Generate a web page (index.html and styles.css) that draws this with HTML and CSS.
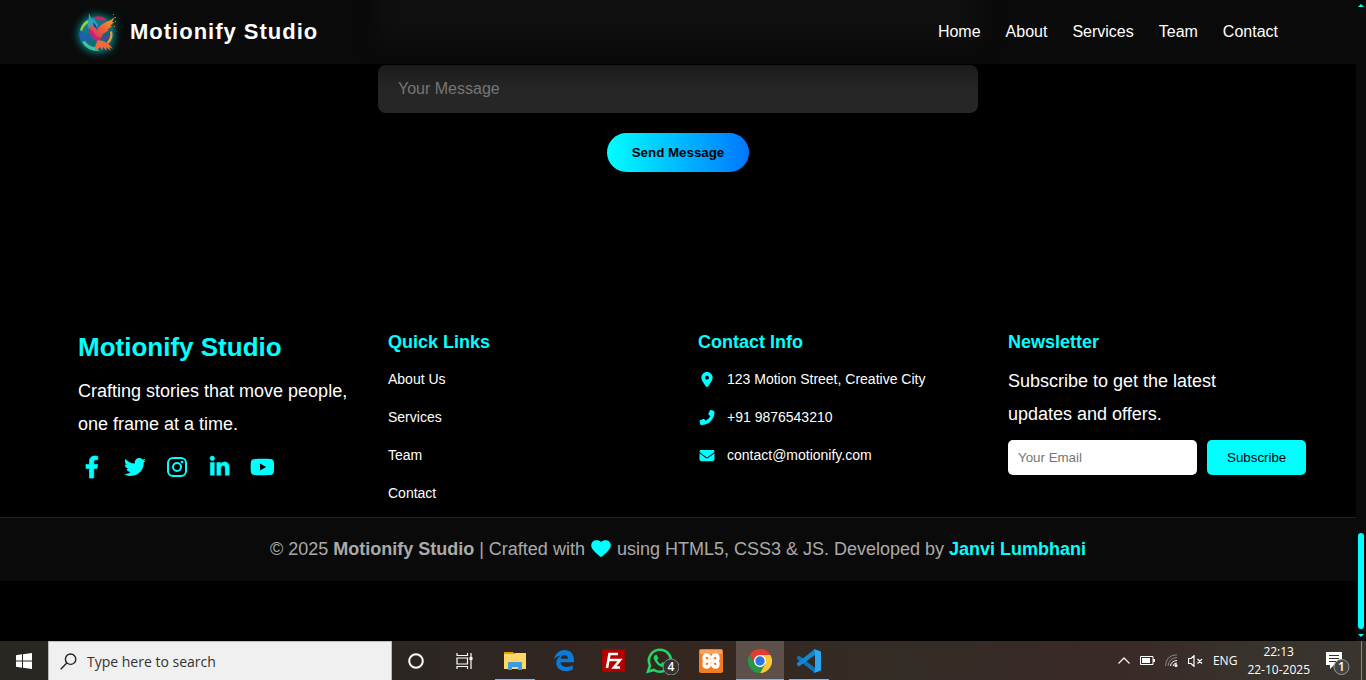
FILE: index.html
```html
<!DOCTYPE html>
<html lang="en">
<head>
<meta charset="utf-8">
<meta name="viewport" content="width=device-width, initial-scale=1">
<title>Motionify Studio</title>
<link rel="stylesheet" href="styles.css">
</head>
<body>
<div class="viewport">
  <div class="page">
    <header class="site-header">
      <div class="container header-inner">
        <a class="brand" href="#home">
          <svg class="brand-mark" viewBox="0 0 40 40" aria-hidden="true">
            <defs>
              <linearGradient id="wing" x1="0" y1="1" x2="1" y2="0"><stop offset="0" stop-color="#d8206a"/><stop offset=".5" stop-color="#ee5a3a"/><stop offset="1" stop-color="#f9a62c"/></linearGradient>
              <linearGradient id="disc" x1="0" y1="0" x2="1" y2="1"><stop offset="0" stop-color="#17808f"/><stop offset="1" stop-color="#0a5f6b"/></linearGradient>
            </defs>
            <circle cx="18.500" cy="22" r="17" fill="url(#disc)"/>
            <path d="M2 18Q5 9 10.500 8l1 2.500Q6 13 4 19z" fill="#9ccc3c"/>
            <path d="M1.500 20l3 0 3 4 3-2 1 6-4 6Q1 29 1.500 20z" fill="#1c5fae"/>
            <path d="M4 30q5 9 17 9l-3-4q-7 0-11-6z" fill="#46c3a0"/>
            <path d="M16 5q8-2 12 2l-4 2q-4-2-7-1z" fill="#c9265f"/>
            <path d="M11 1q1 4 4 7l1-2q1 4 4 6l-1 6-6-1-3-1q-1-3 0-6 1-4 1-9z" fill="#2f9fc0"/>
            <path d="M15 10q4 3 4 8l-3-2z" fill="#1c3f8d"/>
            <path d="M14 20q-1-4-5-4l4-2q5 0 6 5 2-6 9-9 6-2 9-5l-3 5 2 0-4 4 2 0-5 4 2 0-6 4-2 4q-2 4-5 2-4-3-4-8z" fill="url(#wing)"/>
            <path d="M11 17q0 8 8 12l4-3q-6-1-8-7z" fill="#c42480"/>
            <path d="M23 25q6 1 9-4 0 6-7 8z" fill="#5c3f9b"/>
            <path d="M34 19q2 8-4 13l-1-2q4-4 3-10z" fill="#ef9a38"/>
            <path d="M17 38q0-6 3-10l5 1q5 1 10 8l-4-2 2 4-5-4 1 4-4-4-1 3-2-3-3 3z" fill="#f0693f"/>
            <path d="M35 2h1v1h-1zM37 5h1v1h-1zM37 9h1v1h-1zM36 14h1v1h-1z" fill="#f07d26"/>
          </svg>
          <span>Motionify Studio</span>
        </a>
        <nav class="main-nav" aria-label="Main">
          <a href="#home">Home</a><a href="#about">About</a><a href="#services">Services</a><a href="#team">Team</a><a href="#contact">Contact</a>
        </nav>
      </div>
    </header>

    <main class="contact">
      <form class="contact-form">
        <textarea class="message-box" rows="1" placeholder="Your Message" aria-label="Your Message"></textarea>
        <button class="send-button" type="button">Send Message</button>
      </form>
    </main>

    <footer>
      <div class="container footer-grid">
        <section>
          <h2 class="footer-brand">Motionify Studio</h2>
          <p class="tagline">Crafting stories that move people, one frame at a time.</p>
          <div class="socials">
            <a href="#" aria-label="Facebook"><svg viewBox="0 0 320 512"><path d="M279.14 288l14.22-92.66h-88.91v-60.13c0-25.35 12.42-50.06 52.24-50.06h40.42V6.26S260.43 0 225.36 0c-73.22 0-121.08 44.38-121.08 124.72v70.62H22.89V288h81.39v224h100.17V288z" stroke="#0ff" stroke-width="16"/></svg></a>
            <a href="#" aria-label="Twitter"><svg viewBox="0 0 512 512"><path d="M459.37 151.716c.325 4.548.325 9.097.325 13.645 0 138.72-105.583 298.558-298.558 298.558-59.452 0-114.68-17.219-161.137-47.106 8.447.974 16.568 1.299 25.34 1.299 49.055 0 94.213-16.568 130.274-44.832-46.132-.975-84.792-31.188-98.112-72.772 6.498.974 12.995 1.624 19.818 1.624 9.421 0 18.843-1.3 27.614-3.573-48.081-9.747-84.143-51.98-84.143-102.985v-1.299c13.969 7.797 30.214 12.67 47.431 13.319-28.264-18.843-46.781-51.005-46.781-87.391 0-19.492 5.197-37.36 14.294-52.954 51.655 63.675 129.3 105.258 216.365 109.807-1.624-7.797-2.599-15.918-2.599-24.04 0-57.828 46.782-104.934 104.934-104.934 30.213 0 57.502 12.67 76.67 33.137 23.715-4.548 46.456-13.32 66.599-25.34-7.798 24.366-24.366 44.833-46.132 57.827 21.117-2.273 41.584-8.122 60.426-16.243-14.292 20.791-32.161 39.308-52.628 54.253z"/></svg></a>
            <a href="#" aria-label="Instagram"><svg viewBox="0 0 22 22"><rect x="2" y="2" width="18" height="18" rx="5" fill="none" stroke="#0ff" stroke-width="2"/><circle cx="11" cy="11" r="4" fill="none" stroke="#0ff" stroke-width="2"/><circle cx="16" cy="6" r="1.3"/></svg></a>
            <a href="#" aria-label="LinkedIn"><svg viewBox="0 0 448 512"><path d="M100.28 448H7.4V148.9h92.88zM53.79 108.1C24.09 108.1 0 83.5 0 53.8a53.79 53.79 0 0 1 107.58 0c0 29.7-24.1 54.3-53.79 54.3zM447.9 448h-92.68V302.4c0-34.7-.7-79.2-48.29-79.2-48.29 0-55.69 37.7-55.69 76.7V448h-92.78V148.9h89.08v40.8h1.3c12.4-23.5 42.69-48.3 87.88-48.3 94 0 111.28 61.9 111.28 142.3V448z" stroke="#0ff" stroke-width="12"/></svg></a>
            <a href="#" aria-label="YouTube"><svg viewBox="0 0 576 512"><path d="M549.655 124.083c-6.281-23.65-24.787-42.276-48.284-48.597C458.781 64 288 64 288 64S117.22 64 74.629 75.486c-23.497 6.322-42.003 24.947-48.284 48.597-11.412 42.867-11.412 132.305-11.412 132.305s0 89.438 11.412 132.305c6.281 23.65 24.787 41.5 48.284 47.821C117.22 448 288 448 288 448s170.78 0 213.371-11.486c23.497-6.321 42.003-24.171 48.284-47.821 11.412-42.867 11.412-132.305 11.412-132.305s0-89.438-11.412-132.305zm-317.51 213.508V175.185l142.739 81.205-142.739 81.201z"/></svg></a>
          </div>
        </section>
        <section>
          <h3>Quick Links</h3>
          <ul class="footer-list">
            <li><a href="#about">About Us</a></li>
            <li><a href="#services">Services</a></li>
            <li><a href="#team">Team</a></li>
            <li><a href="#contact">Contact</a></li>
          </ul>
        </section>
        <section>
          <h3>Contact Info</h3>
          <ul class="footer-list">
            <li><svg viewBox="0 0 384 512" aria-hidden="true"><path d="M215.7 499.2C267 435 384 279.4 384 192C384 86 298 0 192 0S0 86 0 192c0 87.4 117 243 168.3 307.2c12.3 15.3 35.1 15.3 47.4 0zM192 128a64 64 0 1 0 0 128 64 64 0 1 0 0-128z" fill-rule="evenodd"/></svg>123 Motion Street, Creative City</li>
            <li><svg viewBox="0 0 512 512" aria-hidden="true"><path transform="translate(512 0) scale(-1 1)" d="M164.9 24.6c-7.7-18.6-28-28.5-47.4-23.2l-88 24C12.1 30.2 0 46 0 64C0 311.4 200.6 512 448 512c18 0 33.8-12.1 38.6-29.5l24-88c5.3-19.4-4.6-39.7-23.2-47.4l-96-40c-16.3-6.8-35.2-2.1-46.3 11.6L304.7 368C234.3 334.7 177.3 277.7 144 207.3L193.3 167c13.7-11.2 18.4-30 11.6-46.3l-40-96z"/></svg>+91 9876543210</li>
            <li><svg viewBox="0 0 512 512" aria-hidden="true"><path d="M48 64C21.5 64 0 85.5 0 112c0 15.1 7.1 29.3 19.2 38.4L236.8 313.6c11.4 8.5 27 8.5 38.4 0L492.8 150.4c12.1-9.1 19.2-23.3 19.2-38.4c0-26.5-21.5-48-48-48H48zM0 176V384c0 35.3 28.7 64 64 64H448c35.3 0 64-28.7 64-64V176L294.4 339.2c-22.8 17.1-54 17.1-76.8 0L0 176z"/></svg>contact@motionify.com</li>
          </ul>
        </section>
        <section>
          <h3>Newsletter</h3>
          <p class="newsletter-text">Subscribe to get the latest updates and offers.</p>
          <form class="newsletter-form">
            <input class="email-input" type="email" placeholder="Your Email" aria-label="Your Email">
            <button class="subscribe-button" type="button">Subscribe</button>
          </form>
        </section>
      </div>
      <p class="copyright">© 2025 <strong>Motionify Studio</strong> | Crafted with <svg class="heart" viewBox="0 0 20 17" role="img" aria-label="love"><path d="M10 2C12 0 16-.5 18.300 1.700 20.500 4 20 7 18.500 9 16.500 12 13 15 11 16.500Q10 17.200 9 16.500C7 15 3.500 12 1.500 9 0 7-.5 4 1.700 1.700 4-.5 8 0 10 2z"/></svg> using HTML5, CSS3 &amp; JS. Developed by <strong class="author">Janvi Lumbhani</strong></p>
    </footer>
  </div>
  <div class="scrollbar" aria-hidden="true">
    <span class="arrow arrow-up"></span>
    <span class="thumb"></span>
    <span class="arrow arrow-down"></span>
  </div>
</div>

<div class="taskbar">
  <button class="task-cell" type="button" aria-label="Start"><svg width="16" height="16" viewBox="0 0 16 16"><path fill="#fff" d="M0 2.2L6 1.3V7.5H0zM7 1.2L16 0V7.5H7zM0 8.5H6V14.7L0 13.8zM7 8.5H16V16L7 14.8z"/></svg></button>
  <label class="search">
    <svg width="17" height="17" viewBox="0 0 17 17" fill="none" stroke="#222" stroke-width="1.4"><circle cx="10.6" cy="6.2" r="5.2"/><path d="M6.8 10L.7 16.2"/></svg>
    <input type="text" placeholder="Type here to search" aria-label="Type here to search">
  </label>
  <button class="task-cell" type="button" aria-label="Cortana"><svg width="16" height="16" viewBox="0 0 16 16"><circle cx="8" cy="8" r="6.8" fill="none" stroke="#fff" stroke-width="2"/></svg></button>
  <button class="task-cell" type="button" aria-label="Task View"><svg width="17" height="16" viewBox="0 0 17 16" fill="none" stroke="#fff" stroke-width="1.2"><path d="M1 0v2.5h10.500V0M1 16v-2.500h10.500V16M1 5h10.500v6H1zM15 0v16"/><path d="M13.500 4h3v3h-3z" fill="#fff" stroke="none"/></svg></button>
  <div class="apps">
    <button class="task-cell running" type="button" aria-label="File Explorer"><svg width="22" height="20" viewBox="0 0 22 20"><path fill="#e2a100" d="M0 1h9l2 2H0z"/><path fill="#ffd766" d="M0 3h10l1-1h11v16H0z"/><path fill="#3d9be0" d="M4 19v-7q0-1 1-1h12q1 0 1 1v7h-4v-3H8v3z"/></svg></button>
    <button class="task-cell" type="button" aria-label="Edge"><svg width="20" height="21" viewBox="0 0 20 21"><path fill="#0b7bd8" d="M0 9.500C1.200 3.600 5.200 0 10.500 0 16.200 0 20 4 20 9.800V12.300H6.500c.2 3 2.600 4.600 5.800 4.600 2.500 0 4.700-.6 6.500-1.700v4.300c-2 1-4.500 1.500-7.200 1.500C5.800 21 2.300 17.600 2.300 12.700c0-3 1.500-5.600 4.600-7.300C4.200 5.700 1.700 7 0 9.500zM6.700 8.700h7.200C13.900 6.300 12.700 5 10.600 5 8.400 5 7 6.500 6.700 8.700z"/></svg></button>
    <button class="task-cell" type="button" aria-label="FileZilla"><svg width="23" height="23" viewBox="0 0 23 23"><path fill="#b50000" d="M0 0h23v23H0z"/><path d="M0 0h23v23H0z" fill="none" stroke="#8c0000" stroke-dasharray="1 1"/><path d="M5 19L7.500 5H16M6 11h7M12 11h6l-6 7.500h6" fill="none" stroke="#fff" stroke-width="2.600"/></svg></button>
    <button class="task-cell" type="button" aria-label="WhatsApp"><svg class="whatsapp" width="34" height="28" viewBox="1 0 34 28"><path d="M6 18.500A11 11 0 1 1 10 23L4 24.600z" fill="none" stroke="#25d366" stroke-width="2.600"/><path d="M10.500 8.500l2-1 2 4-1.500 1.500q1.500 3 4 4l1.500-2 4 2q0 3-4 3-4-.5-7-5-3-4-1-6.500z" fill="#25d366"/><circle cx="27" cy="20" r="8" fill="#333" stroke="#888"/><text x="27" y="24" text-anchor="middle" class="badge-text">4</text></svg></button>
    <button class="task-cell" type="button" aria-label="XAMPP"><svg width="24" height="24" viewBox="0 0 24 24"><rect width="24" height="24" rx="2" fill="#f47b20"/><path d="M1 1h22v4H1z" fill="#f9a05d"/><g fill="none" stroke="#fff" stroke-width="3.400" stroke-linejoin="round" stroke-linecap="round"><path d="M10.500 8.500Q10 6 7.500 6 5 6 5 9t2.500 3Q5 12 5 15t2.500 3q2.500 0 3-2.500M13.500 8.500Q14 6 16.500 6 19 6 19 9t-2.500 3q2.500 0 2.500 3t-2.500 3q-2.500 0-3-2.500M8 12h8"/></g></svg></button>
    <button class="task-cell running active" type="button" aria-label="Chrome"><svg width="24" height="24" viewBox="0 0 24 24"><path fill="#e33b2e" d="M1.600 6A12 12 0 0 1 22.400 6H12L6.800 15z"/><path fill="#fcc934" d="M22.400 6A12 12 0 0 1 12 24l5.200-9L12 6z"/><path fill="#279847" d="M1.600 6A12 12 0 0 0 12 24l5.200-9H6.800z"/><circle cx="12" cy="12" r="6" fill="#fff"/><circle cx="12" cy="12" r="4.700" fill="#2f73e8"/></svg></button>
    <button class="task-cell running" type="button" aria-label="Visual Studio Code"><svg width="24" height="24" viewBox="0 0 24 24"><path fill="#0b75bd" d="M0 8l2-1.500L18 19v5L0 10z"/><path fill="#1488d0" d="M0 16l2 1.500L18 6V0L0 14z"/><path fill="#2ba7ef" d="M17 0l7 2.500v19L17 24l1-3V3z"/></svg></button>
  </div>
  <div class="tray">
    <svg width="12" height="7" viewBox="0 0 12 7"><path d="M.5 6.500L6 1l5.500 5.500" fill="none" stroke="#eee" stroke-width="1.300"/></svg>
    <svg width="15" height="9" viewBox="0 0 15 9"><path d="M.5.500h12.500v8H.5z" fill="none" stroke="#fff"/><path fill="#fff" d="M2 2h8v5H2zM13 3h2v3h-2z"/></svg>
    <svg width="13" height="13" viewBox="0 0 13 13" fill="none"><path d="M.5 12Q1 1 12 .8M3 12Q4 4 12 3.500" stroke="#888"/><path d="M5.500 12Q6 7 12 6.500M8 12q.5-3 4-3" stroke="#fff"/><circle cx="11" cy="11.500" r="1.500" fill="#fff"/></svg>
    <svg width="15" height="12" viewBox="0 0 15 12" fill="none" stroke="#fff" stroke-width="1.200"><path d="M.5 3.500h2.500L6 .7v10.600L3 8.500H.5zM9.500 4l4.500 4.500M14 4L9.500 8.500"/></svg>
    <span class="language">ENG</span>
    <time class="clock"><span>22:13</span><span>22-10-2025</span></time>
    <svg class="notice" width="26" height="28" viewBox="0 0 26 28"><path fill="#fff" d="M1 5h16v13h-8l-4 4v-4H1z"/><path d="M4 8.500h10M4 11.500h10M4 14.500h7" stroke="#333"/><circle cx="16.500" cy="20" r="7.500" fill="#444" stroke="#999"/><text x="16.500" y="24" text-anchor="middle" class="badge-text">1</text></svg>
    <span class="peek"></span>
  </div>
</div>
</body>
</html>
```

FILE: styles.css
```css
* { box-sizing: border-box; }

body {
  margin: 0;
  min-height: 100vh;
  display: flex;
  flex-direction: column;
  background: #000;
  color: #fff;
  font-family: Arial, "Liberation Sans", sans-serif;
}

a { color: inherit; text-decoration: none; }
h2, h3, p, ul { margin: 0; padding: 0; }
ul { list-style: none; }
button, input, textarea { font-family: inherit; border: 0; outline: 0; }

.viewport { flex: 1; display: flex; }
.page { flex: 1; min-width: 0; }
.container { max-width: 1200px; margin: 0 auto; }

/* Header */
.site-header {
  position: relative;
  overflow: clip;
  background: #0a0a0a;
}
.site-header::before {
  content: "";
  position: absolute;
  inset: -30px 0 22px;
  width: 600px;
  margin: 0 auto;
  background: #0f0f0f;
  filter: blur(10px);
}
.header-inner {
  position: relative;
  display: flex;
  align-items: center;
  justify-content: space-between;
  min-height: 64px;
}
.brand {
  display: flex;
  align-items: center;
  gap: 12px;
  font-size: 22px;
  font-weight: bold;
  letter-spacing: 1px;
}
.brand-mark {
  width: 40px;
  height: 40px;
  overflow: visible;
  filter: drop-shadow(0 0 5px rgba(0, 255, 255, .7));
}
.main-nav { display: flex; gap: 25px; font-size: 16px; }

/* Contact form */
.contact { padding: 1px 20px 150px; }
.contact-form {
  display: flex;
  flex-direction: column;
  align-items: center;
  gap: 20px;
  max-width: 600px;
  margin: 0 auto;
}
.message-box {
  width: 100%;
  height: 48px;
  padding: 14px 20px;
  border-radius: 8px;
  background: linear-gradient(#1b1b1b, #262626 24px);
  color: #fff;
  font-size: 16px;
  line-height: 20px;
  resize: none;
  overflow: hidden;
}
.message-box::placeholder { color: #757575; }
.send-button {
  padding: 12px 25px;
  border-radius: 30px;
  background: linear-gradient(90deg, #0ff, #0077ff);
  color: #000;
  font-weight: bold;
}

/* Footer */
.footer-grid {
  display: grid;
  grid-template-columns: repeat(4, minmax(0, 1fr));
  gap: 40px;
  padding-bottom: 5px;
  font-size: 18px;
  line-height: 33px;
}
.footer-grid svg { fill: #0ff; }
.footer-brand { color: #0ff; font-size: 26px; line-height: 50px; }
h3 { color: #0ff; font-size: 18px; line-height: 40px; }
.tagline { margin-top: 3px; }
.socials {
  display: flex;
  justify-content: space-between;
  max-width: 198px;
  margin-top: 15px;
}
.socials a { display: flex; justify-content: center; width: 28px; }
.socials svg { height: 22px; overflow: visible; }
.footer-list { margin-top: -2px; }
.footer-list li {
  display: flex;
  align-items: center;
  gap: 11px;
  font-size: 14px;
  line-height: 38px;
}
.footer-list svg { width: 18px; height: 15px; }
.newsletter-text { margin-top: 3px; }
.newsletter-form { display: flex; gap: 10px; margin-top: 9px; }
.email-input {
  flex: none;
  width: 189px;
  height: 35px;
  padding: 10px;
  border-radius: 5px;
  background: #fff;
}
.subscribe-button {
  padding: 10px 20px;
  border-radius: 5px;
  background: #0ff;
  color: #000;
}
.copyright {
  padding: 15px 20px;
  border-top: 1px solid #222;
  background: #0a0a0a;
  color: #aaa;
  font-size: 18px;
  line-height: 33px;
  text-align: center;
}
.heart { width: 20px; height: 17px; margin: 0 1px; vertical-align: -2px; fill: #0ff; }
.author { color: #0ff; }

/* Page scrollbar */
.scrollbar {
  width: 10px;
  padding: 4px 2px;
  display: flex;
  flex-direction: column;
  align-items: center;
  background: #0a0a0a;
}
.arrow { border: 3px solid transparent; }
.arrow-up { border-top: 0; border-bottom-color: #0ff; }
.arrow-down { border-bottom: 0; border-top-color: #0ff; }
.thumb {
  width: 6px;
  height: 96px;
  margin: auto 0 5px;
  border-radius: 3px;
  background: #0ff;
}

/* Taskbar */
.taskbar {
  display: flex;
  height: 39px;
  background: linear-gradient(90deg, #292722, #2c2623 30%, #352720 50%, #332c25 65%, #3a2927 82%, #38332d 92%, #39352d);
  font-family: "Segoe UI", "Open Sans", sans-serif;
}
.task-cell {
  display: flex;
  align-items: center;
  justify-content: center;
  width: 48px;
  padding: 0;
  background: none;
}
.search {
  display: flex;
  align-items: center;
  gap: 10px;
  width: 344px;
  padding-left: 11px;
  border: 1px solid #bbb;
  border-bottom: 0;
  background: #f0f0f0;
}
.search input {
  flex: 1;
  padding: 0;
  background: none;
  font-family: inherit;
  font-size: 14px;
}
.search input::placeholder { color: #333; }
.apps { display: flex; gap: 1px; margin-left: 3px; }
.running {
  background: linear-gradient(#83b5e0, #83b5e0) bottom / 40px 1px no-repeat;
}
.active {
  background-color: #5d504b;
  background-size: 100% 1px;
}
.badge-text { fill: #fff; font-size: 12px; font-weight: 600; }
.tray {
  display: flex;
  align-items: center;
  margin-left: auto;
  gap: 10px;
  font-size: 12px;
}
.clock {
  display: flex;
  flex-direction: column;
  align-items: center;
  line-height: 18px;
}
.notice { margin-left: 5px; }
.peek { align-self: stretch; width: 5px; border-left: 1px solid #888; }
```
